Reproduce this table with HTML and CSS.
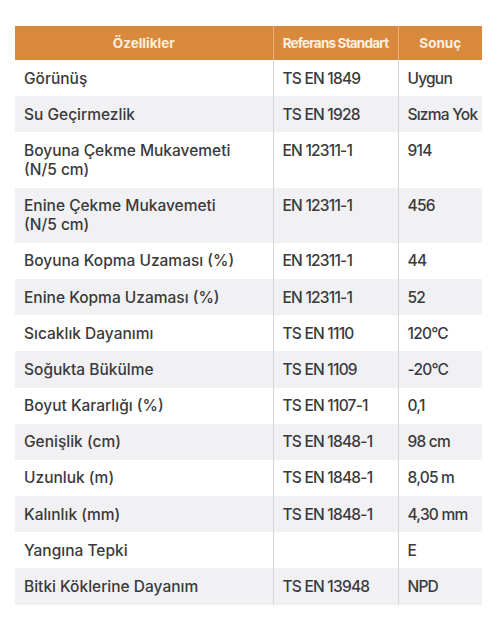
FILE: index.html
```html
<!DOCTYPE html>
<html lang="tr">
<head>
<meta charset="utf-8">
<link rel="stylesheet" href="styles.css">
</head>
<body>
<table class="spec">
  <colgroup><col class="c1"><col class="c2"><col class="c3"></colgroup>
  <thead>
    <tr><th>Özellikler</th><th class="tight">Referans Standart</th><th>Sonuç</th></tr>
  </thead>
  <tbody>
    <tr><td>Görünüş</td><td class="std">TS EN 1849</td><td class="val">Uygun</td></tr>
    <tr><td>Su Geçirmezlik</td><td class="std">TS EN 1928</td><td class="val">Sızma Yok</td></tr>
    <tr><td>Boyuna Çekme Mukavemeti<br>(N/5 cm)</td><td class="std">EN 12311-1</td><td class="val">914</td></tr>
    <tr><td>Enine Çekme Mukavemeti<br>(N/5 cm)</td><td class="std">EN 12311-1</td><td class="val">456</td></tr>
    <tr><td>Boyuna Kopma Uzaması (%)</td><td class="std">EN 12311-1</td><td class="val">44</td></tr>
    <tr><td>Enine Kopma Uzaması (%)</td><td class="std">EN 12311-1</td><td class="val">52</td></tr>
    <tr><td>Sıcaklık Dayanımı</td><td class="std">TS EN 1110</td><td class="val">120°C</td></tr>
    <tr><td>Soğukta Bükülme</td><td class="std">TS EN 1109</td><td class="val">-20°C</td></tr>
    <tr><td>Boyut Kararlığı (%)</td><td class="std">TS EN 1107-1</td><td class="val">0,1</td></tr>
    <tr><td>Genişlik (cm)</td><td class="std">TS EN 1848-1</td><td class="val">98 cm</td></tr>
    <tr><td>Uzunluk (m)</td><td class="std">TS EN 1848-1</td><td class="val">8,05 m</td></tr>
    <tr><td>Kalınlık (mm)</td><td class="std">TS EN 1848-1</td><td class="val">4,30 mm</td></tr>
    <tr><td>Yangına Tepki</td><td class="std"></td><td class="val">E</td></tr>
    <tr><td>Bitki Köklerine Dayanım</td><td class="std">TS EN 13948</td><td class="val">NPD</td></tr>
  </tbody>
</table>
</body>
</html>
```
FILE: styles.css
```css
html, body {
  margin: 0;
  padding: 0;
  background: #ffffff;
}
body {
  padding: 26px 0 0 15px;
  font-family: Inter, "Noto Sans", sans-serif;
}
.spec {
  border-collapse: collapse;
  table-layout: fixed;
  width: 467px;
}
.c1 { width: 258px; }
.c2 { width: 125px; }
.c3 { width: 84px; }
.spec th {
  background: #d9893c;
  color: #fcefdf;
  font-size: 13.5px;
  font-weight: 700;
  height: 34px;
  padding: 0 2px;
  text-align: center;
  border-left: 1px solid #e8b27c;
}
.spec th:first-child { border-left: none; }
.spec th.tight { letter-spacing: -0.06em; }
.spec td {
  font-size: 15.5px;
  font-weight: 500;
  line-height: 19px;
  color: #3a3a3d;
  padding: 8.6px 4px 8.6px 9px;
  vertical-align: top;
  border-left: 1px solid #d6d6d8;
}
.spec td:first-child { border-left: none; }
.spec tbody tr:nth-child(odd) td { background: #ffffff; }
.spec tbody tr:nth-child(even) td { background: #f1f1f3; }
.spec td.std, .spec td.val {
  letter-spacing: -0.05em;
}
```
